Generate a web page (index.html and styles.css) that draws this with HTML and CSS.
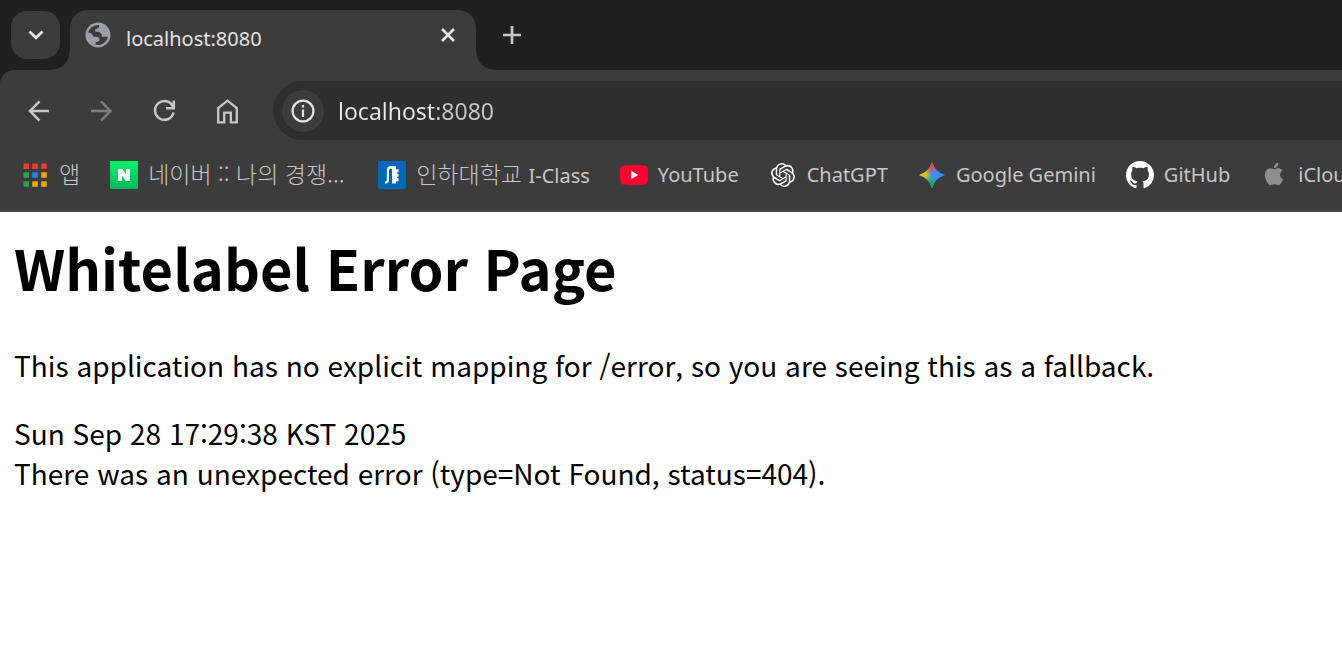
FILE: index.html
```html
<!DOCTYPE html>
<html lang="ko">
<head>
<meta charset="utf-8">
<title>localhost:8080</title>
<link rel="stylesheet" href="styles.css">
</head>
<body>
<header class="browser">
  <div class="tab-strip">
    <button class="tab-search" aria-label="Search tabs">
      <svg width="18" height="18" viewBox="0 0 18 18"><path d="M2.500 5.500l6.500 6.300L15.500 5.500" fill="none" stroke="currentColor" stroke-width="2.700"/></svg>
    </button>
    <div class="tab">
      <svg class="globe" width="30" height="30" viewBox="0 0 24 24"><circle cx="12" cy="12" r="10" fill="currentColor"/><path fill="#3c3c3c" d="M4.200 10C5.300 6.500 8.500 4 12.800 4.100V6L9.800 7.500V9.400H13l2 2v1.900h4.900C19.200 17 16 19.800 12.300 20l-2.300-.3V18l3.200-1.500V14.500l-2-1.200H8.500L6.500 10.600z"/></svg>
      <span class="tab-title">localhost:8080</span>
      <button class="plain" aria-label="Close tab">
        <svg width="16" height="16" viewBox="0 0 16 16"><path d="M2 2l12 12M14 2L2 14" fill="none" stroke="currentColor" stroke-width="2.600"/></svg>
      </button>
    </div>
    <button class="plain new-tab" aria-label="New tab">
      <svg width="18" height="18" viewBox="0 0 18 18"><path d="M9 0v18M0 9h18" fill="none" stroke="currentColor" stroke-width="2.700"/></svg>
    </button>
  </div>
  <div class="toolbar">
    <nav class="nav-buttons" aria-label="Navigation">
      <button class="plain" aria-label="Back">
        <svg width="28" height="28" viewBox="0 0 28 28"><path d="M25 14H6M15.500 4.300L6 14l9.500 9.700" fill="none" stroke="currentColor" stroke-width="2.500"/></svg>
      </button>
      <button class="plain forward" aria-label="Forward" disabled>
        <svg width="28" height="28" viewBox="0 0 28 28"><path d="M4 14h19M14 4.300l9.500 9.700-9.500 9.700" fill="none" stroke="currentColor" stroke-width="2.500"/></svg>
      </button>
      <button class="plain" aria-label="Reload">
        <svg width="28" height="28" viewBox="0 0 28 28"><path d="M23 9.500A9.400 9.400 0 1 0 23.600 15.500M23.800 3.500v7.800H16" fill="none" stroke="currentColor" stroke-width="2.500"/></svg>
      </button>
      <button class="plain" aria-label="Home">
        <svg width="28" height="28" viewBox="0 0 28 28"><path d="M5.200 25.300V11L14.500 3.700l9.300 7.300v14.300h-6v-9.600h-6.600v9.600z" fill="none" stroke="currentColor" stroke-width="2.300"/></svg>
      </button>
    </nav>
    <form class="omnibox">
      <button type="button" class="site-info" aria-label="View site information">
        <svg width="24" height="24" viewBox="0 0 24 24"><circle cx="12" cy="12" r="10.400" fill="none" stroke="currentColor" stroke-width="2.200"/><path d="M12 10.500v7.500M12 6v2.500" stroke="currentColor" stroke-width="2.200"/></svg>
      </button>
      <input class="address" type="text" aria-label="Address" value="localhost:8080">
    </form>
  </div>
  <nav class="bookmarks" aria-label="Bookmarks">
    <a class="bookmark" href="#">
      <svg width="28" height="28" viewBox="0 0 28 28"><path fill="#f4382f" d="M2.500 2.500h5.500v5.500H2.500zM11.300 2.500h5.500v5.500h-5.500zM20.200 2.500h5.500v5.500h-5.500z"/><path fill="#2d9d50" d="M2.500 11.300h5.500v5.500H2.500zM2.500 20.200h5.500v5.500H2.500z"/><path fill="#2287f0" d="M11.300 11.300h5.500v5.500h-5.500z"/><path fill="#f2a508" d="M20.200 11.300h5.500v5.500h-5.500zM11.300 20.200h5.500v5.500h-5.500zM20.200 20.200h5.500v5.500h-5.500z"/></svg>
      <span class="korean">앱</span>
    </a>
    <a class="bookmark" href="#">
      <svg width="28" height="28" viewBox="0 0 28 28"><defs><linearGradient id="naver" x2="0" y2="1"><stop stop-color="#02f566"/><stop offset="1" stop-color="#04b661"/></linearGradient></defs><path fill="url(#naver)" d="M0 0h28v28H0z"/><path fill="#fff" d="M8 8h4.500l3.500 5.500V8h4v12h-4.300L12 14.500V20H8z"/></svg>
      <span class="korean truncated">네이버 :: 나의 경쟁...</span>
    </a>
    <a class="bookmark" href="#">
      <svg width="28" height="28" viewBox="0 0 28 28"><path fill="#0069b7" d="M0 0h28v28H0z"/><path d="M7 21.200c2 .500 2.900-.500 2.900-2.500V9.500c0-2.200 1-3.300 3.600-3.300" fill="none" stroke="#fff" stroke-width="2.200"/><path fill="#fff" d="M12.500 5.200H18v3h2.500v3H19v1.500h1.500v3H19v1.500h1.500v3H18V22.500h-4V8h-1.500z"/></svg>
      <span class="korean">인하대학교 <span class="latin">I-Class</span></span>
    </a>
    <a class="bookmark" href="#">
      <svg width="28" height="28" viewBox="0 0 28 28"><path fill="#ff0033" d="M3.500 4.500Q14 3.500 24.500 4.500q3 .500 3.200 3.300.600 6.200 0 12.400-.200 2.800-3.200 3.300-10.500 1-21 0-3-.500-3.200-3.300-.600-6.200 0-12.400.200-2.800 3.200-3.300z"/><path fill="#fff" d="M11 9.800v8.400l7.300-4.200z"/></svg>
      <span>YouTube</span>
    </a>
    <a class="bookmark" href="#">
      <svg width="28" height="28" viewBox="-2 -2 28 28"><path fill="#fff" d="M22.2819 9.8211a5.9847 5.9847 0 0 0-.5157-4.9108 6.0462 6.0462 0 0 0-6.5098-2.9A6.0651 6.0651 0 0 0 4.9807 4.1818a5.9847 5.9847 0 0 0-3.9977 2.9 6.0462 6.0462 0 0 0 .7427 7.0966 5.98 5.98 0 0 0 .511 4.9107 6.051 6.051 0 0 0 6.5146 2.9001A5.9847 5.9847 0 0 0 13.2599 24a6.0557 6.0557 0 0 0 5.7718-4.2058 5.9894 5.9894 0 0 0 3.9977-2.9001 6.0557 6.0557 0 0 0-.7475-7.0729zm-9.022 12.6081a4.4755 4.4755 0 0 1-2.8764-1.0408l.1419-.0804 4.7783-2.7582a.7948.7948 0 0 0 .3927-.6813v-6.7369l2.02 1.1686a.071.071 0 0 1 .038.052v5.5826a4.504 4.504 0 0 1-4.4945 4.4944zm-9.6607-4.1254a4.4708 4.4708 0 0 1-.5346-3.0137l.142.0852 4.783 2.7582a.7712.7712 0 0 0 .7806 0l5.8428-3.3685v2.3324a.0804.0804 0 0 1-.0332.0615L9.74 19.9502a4.4992 4.4992 0 0 1-6.1408-1.6464zM2.3408 7.8956a4.485 4.485 0 0 1 2.3655-1.9728V11.6a.7664.7664 0 0 0 .3879.6765l5.8144 3.3543-2.0201 1.1685a.0757.0757 0 0 1-.071 0l-4.8303-2.7865A4.504 4.504 0 0 1 2.3408 7.872zm16.5963 3.8558L13.1038 8.364 15.1192 7.2a.0757.0757 0 0 1 .071 0l4.8303 2.7913a4.4944 4.4944 0 0 1-.6765 8.1042v-5.6772a.79.79 0 0 0-.407-.667zm2.0107-3.0231l-.142-.0852-4.7735-2.7818a.7759.7759 0 0 0-.7854 0L9.409 9.2297V6.8974a.0662.0662 0 0 1 .0284-.0615l4.8303-2.7866a4.4992 4.4992 0 0 1 6.6802 4.66zM8.3065 12.863l-2.02-1.1638a.0804.0804 0 0 1-.038-.0567V6.0742a4.4992 4.4992 0 0 1 7.3757-3.4537l-.142.0805L8.704 5.459a.7948.7948 0 0 0-.3927.6813zm1.0976-2.3654l2.602-1.4998 2.6069 1.4998v2.9994l-2.5974 1.4997-2.6067-1.4997Z"/></svg>
      <span>ChatGPT</span>
    </a>
    <a class="bookmark" href="#">
      <svg width="28" height="28" viewBox="0 0 28 28"><defs><linearGradient id="gem-base" x1="0" y1="0" x2="1" y2="0"><stop offset=".2" stop-color="#8fc46b"/><stop offset=".5" stop-color="#3b8cf5"/></linearGradient><radialGradient id="gem-red" gradientUnits="userSpaceOnUse" cx="13" cy="2" r="11"><stop offset=".3" stop-color="#f6423f"/><stop offset="1" stop-color="#f6423f" stop-opacity="0"/></radialGradient><radialGradient id="gem-yellow" gradientUnits="userSpaceOnUse" cx="1" cy="13" r="13"><stop offset=".3" stop-color="#fbbc04"/><stop offset="1" stop-color="#fbbc04" stop-opacity="0"/></radialGradient><radialGradient id="gem-green" gradientUnits="userSpaceOnUse" cx="13" cy="27" r="12"><stop offset=".3" stop-color="#12b05b"/><stop offset="1" stop-color="#12b05b" stop-opacity="0"/></radialGradient><path id="gem" d="M14 1Q17 11 27 14 17 17 14 27 11 17 1 14 11 11 14 1z"/></defs><use href="#gem" fill="url(#gem-base)"/><use href="#gem" fill="url(#gem-yellow)"/><use href="#gem" fill="url(#gem-red)"/><use href="#gem" fill="url(#gem-green)"/></svg>
      <span>Google Gemini</span>
    </a>
    <a class="bookmark" href="#">
      <svg width="28" height="28" viewBox="0 0 16 16"><path fill="#fff" d="M8 0C3.580 0 0 3.580 0 8c0 3.540 2.290 6.530 5.470 7.590.4.070.55-.17.55-.38 0-.19-.01-.82-.01-1.490-2.010.37-2.530-.49-2.690-.94-.09-.23-.48-.94-.82-1.130-.28-.15-.68-.52-.01-.53.63-.01 1.080.58 1.230.82.72 1.210 1.870.87 2.330.66.07-.52.28-.87.51-1.070-1.780-.2-3.640-.89-3.640-3.950 0-.87.31-1.590.82-2.150-.08-.2-.36-1.020.08-2.120 0 0 .67-.21 2.200.82.64-.18 1.320-.27 2-.27.68 0 1.360.09 2 .27 1.530-1.040 2.200-.82 2.200-.82.44 1.100.16 1.920.08 2.120.51.56.82 1.270.82 2.150 0 3.070-1.870 3.750-3.650 3.950.29.25.54.73.54 1.480 0 1.070-.01 1.930-.01 2.200 0 .21.15.46.55.38A8.010 8.010 0 0 0 16 8c0-4.420-3.580-8-8-8z"/></svg>
      <span>GitHub</span>
    </a>
    <a class="bookmark" href="#">
      <svg width="28" height="28" viewBox="-3 -2 30 30"><path fill="#8e8e8e" d="M12.152 6.896c-.948 0-2.415-1.078-3.960-1.040-2.040.027-3.910 1.183-4.961 3.014-2.117 3.675-.546 9.103 1.519 12.090 1.013 1.454 2.208 3.090 3.792 3.039 1.520-.065 2.090-.987 3.935-.987 1.831 0 2.350.987 3.960.948 1.637-.026 2.676-1.480 3.676-2.948 1.156-1.688 1.636-3.325 1.662-3.415-.039-.013-3.182-1.221-3.220-4.857-.026-3.040 2.480-4.494 2.597-4.559-1.429-2.090-3.623-2.324-4.390-2.376-2-.156-3.675 1.090-4.610 1.090zM15.530 3.830c.843-1.012 1.400-2.427 1.245-3.830-1.207.052-2.662.805-3.532 1.818-.780.896-1.454 2.338-1.273 3.714 1.338.104 2.715-.688 3.560-1.701"/></svg>
      <span>iCloud</span>
    </a>
  </nav>
</header>
<main class="page">
  <h1>Whitelabel Error Page</h1>
  <p>This application has no explicit mapping for /error, so you are seeing this as a fallback.</p>
  <div>Sun Sep 28 17:29:38 KST 2025</div>
  <div>There was an unexpected error (type=Not Found, status=404).</div>
</main>
</body>
</html>
```

FILE: styles.css
```css
* {
  box-sizing: border-box;
}

body {
  margin: 0;
  background: #fff;
  color: #000;
  overflow-x: hidden;
  font-family: "Noto Sans CJK KR", sans-serif;
}

svg {
  display: block;
  flex: none;
}

button {
  border: 0;
  padding: 0;
  font: inherit;
}

.browser {
  background: #1f2120;
  color: #c7c7c7;
  font-family: "Noto Sans", "Noto Sans CJK KR", sans-serif;
  font-size: 20px;
}

.plain {
  display: grid;
  place-items: center;
  background: none;
  color: inherit;
}

/* Tab strip */
.tab-strip {
  display: flex;
  align-items: flex-end;
  gap: 10px;
  padding: 10px 11px 0;
}

.tab-search {
  display: grid;
  place-items: center;
  align-self: flex-start;
  width: 49px;
  height: 48px;
  margin-top: 1px;
  border-radius: 16px;
  background: #3c3c3c;
  color: #e3e3e3;
}

.tab {
  position: relative;
  display: flex;
  align-items: center;
  width: 406px;
  height: 60px;
  padding: 0 20px 10px 13px;
  border-radius: 18px 18px 0 0;
  background: #3c3c3c;
  color: #e3e3e3;
}

.tab::before,
.tab::after {
  content: "";
  position: absolute;
  bottom: 0;
  width: 18px;
  height: 18px;
}

.tab::before {
  right: 100%;
  background: radial-gradient(circle at 0 0, transparent 17px, #3c3c3c 18px);
}

.tab::after {
  left: 100%;
  background: radial-gradient(circle at 100% 0, transparent 17px, #3c3c3c 18px);
}

.globe {
  color: #9aa0a6;
}

.tab-title {
  flex: 1;
  padding: 6px 0 0 13px;
}

.new-tab {
  height: 50px;
  margin: 0 0 10px 17px;
}

/* Toolbar */
.toolbar {
  display: flex;
  align-items: center;
  gap: 32px;
  padding: 11px 0 11px 24px;
  border-radius: 14px 0 0 0;
  background: #3c3c3c;
}

.nav-buttons {
  display: flex;
  gap: 35px;
}

.forward {
  color: #7b7b7b;
}

.omnibox {
  display: flex;
  flex: 1;
  align-items: center;
  gap: 14px;
  height: 59px;
  padding-left: 9px;
  border-radius: 30px 0 0 30px;
  background: #2e2e2e;
}

.site-info {
  display: grid;
  place-items: center;
  width: 42px;
  height: 42px;
  border-radius: 50%;
  background: #3c3c3c;
  color: #e3e3e3;
}

.address {
  flex: 1;
  min-width: 0;
  border: 0;
  padding: 0;
  outline: 0;
  background: linear-gradient(90deg, #e8e8e8 96px, #c7c7c7 96px);
  background-clip: text;
  color: transparent;
  font-family: "Noto Sans", sans-serif;
  font-size: 23px;
}

/* Bookmarks bar */
.bookmarks {
  display: flex;
  gap: 30px;
  padding: 8px 0 20px 21px;
  overflow: hidden;
  border-bottom: 2px solid #474747;
  background: #3c3c3c;
}

.bookmark {
  display: flex;
  flex: none;
  align-items: center;
  gap: 10px;
  height: 31px;
  color: inherit;
  text-decoration: none;
  white-space: nowrap;
}

.korean {
  padding-bottom: 4px;
  font-family: "Noto Sans CJK KR", sans-serif;
  font-size: 23px;
  font-weight: 300;
}

.latin {
  font-family: "Noto Sans", sans-serif;
  font-size: 20px;
  font-weight: 400;
}

.truncated {
  min-width: 200px;
}

/* Error page */
.page {
  padding: 14px;
  font-size: 28px;
  line-height: 40px;
}

.page h1 {
  margin: 0 0 37px;
  font-size: 56px;
  line-height: 82px;
}

.page p {
  margin: 0 0 28px;
}
```
